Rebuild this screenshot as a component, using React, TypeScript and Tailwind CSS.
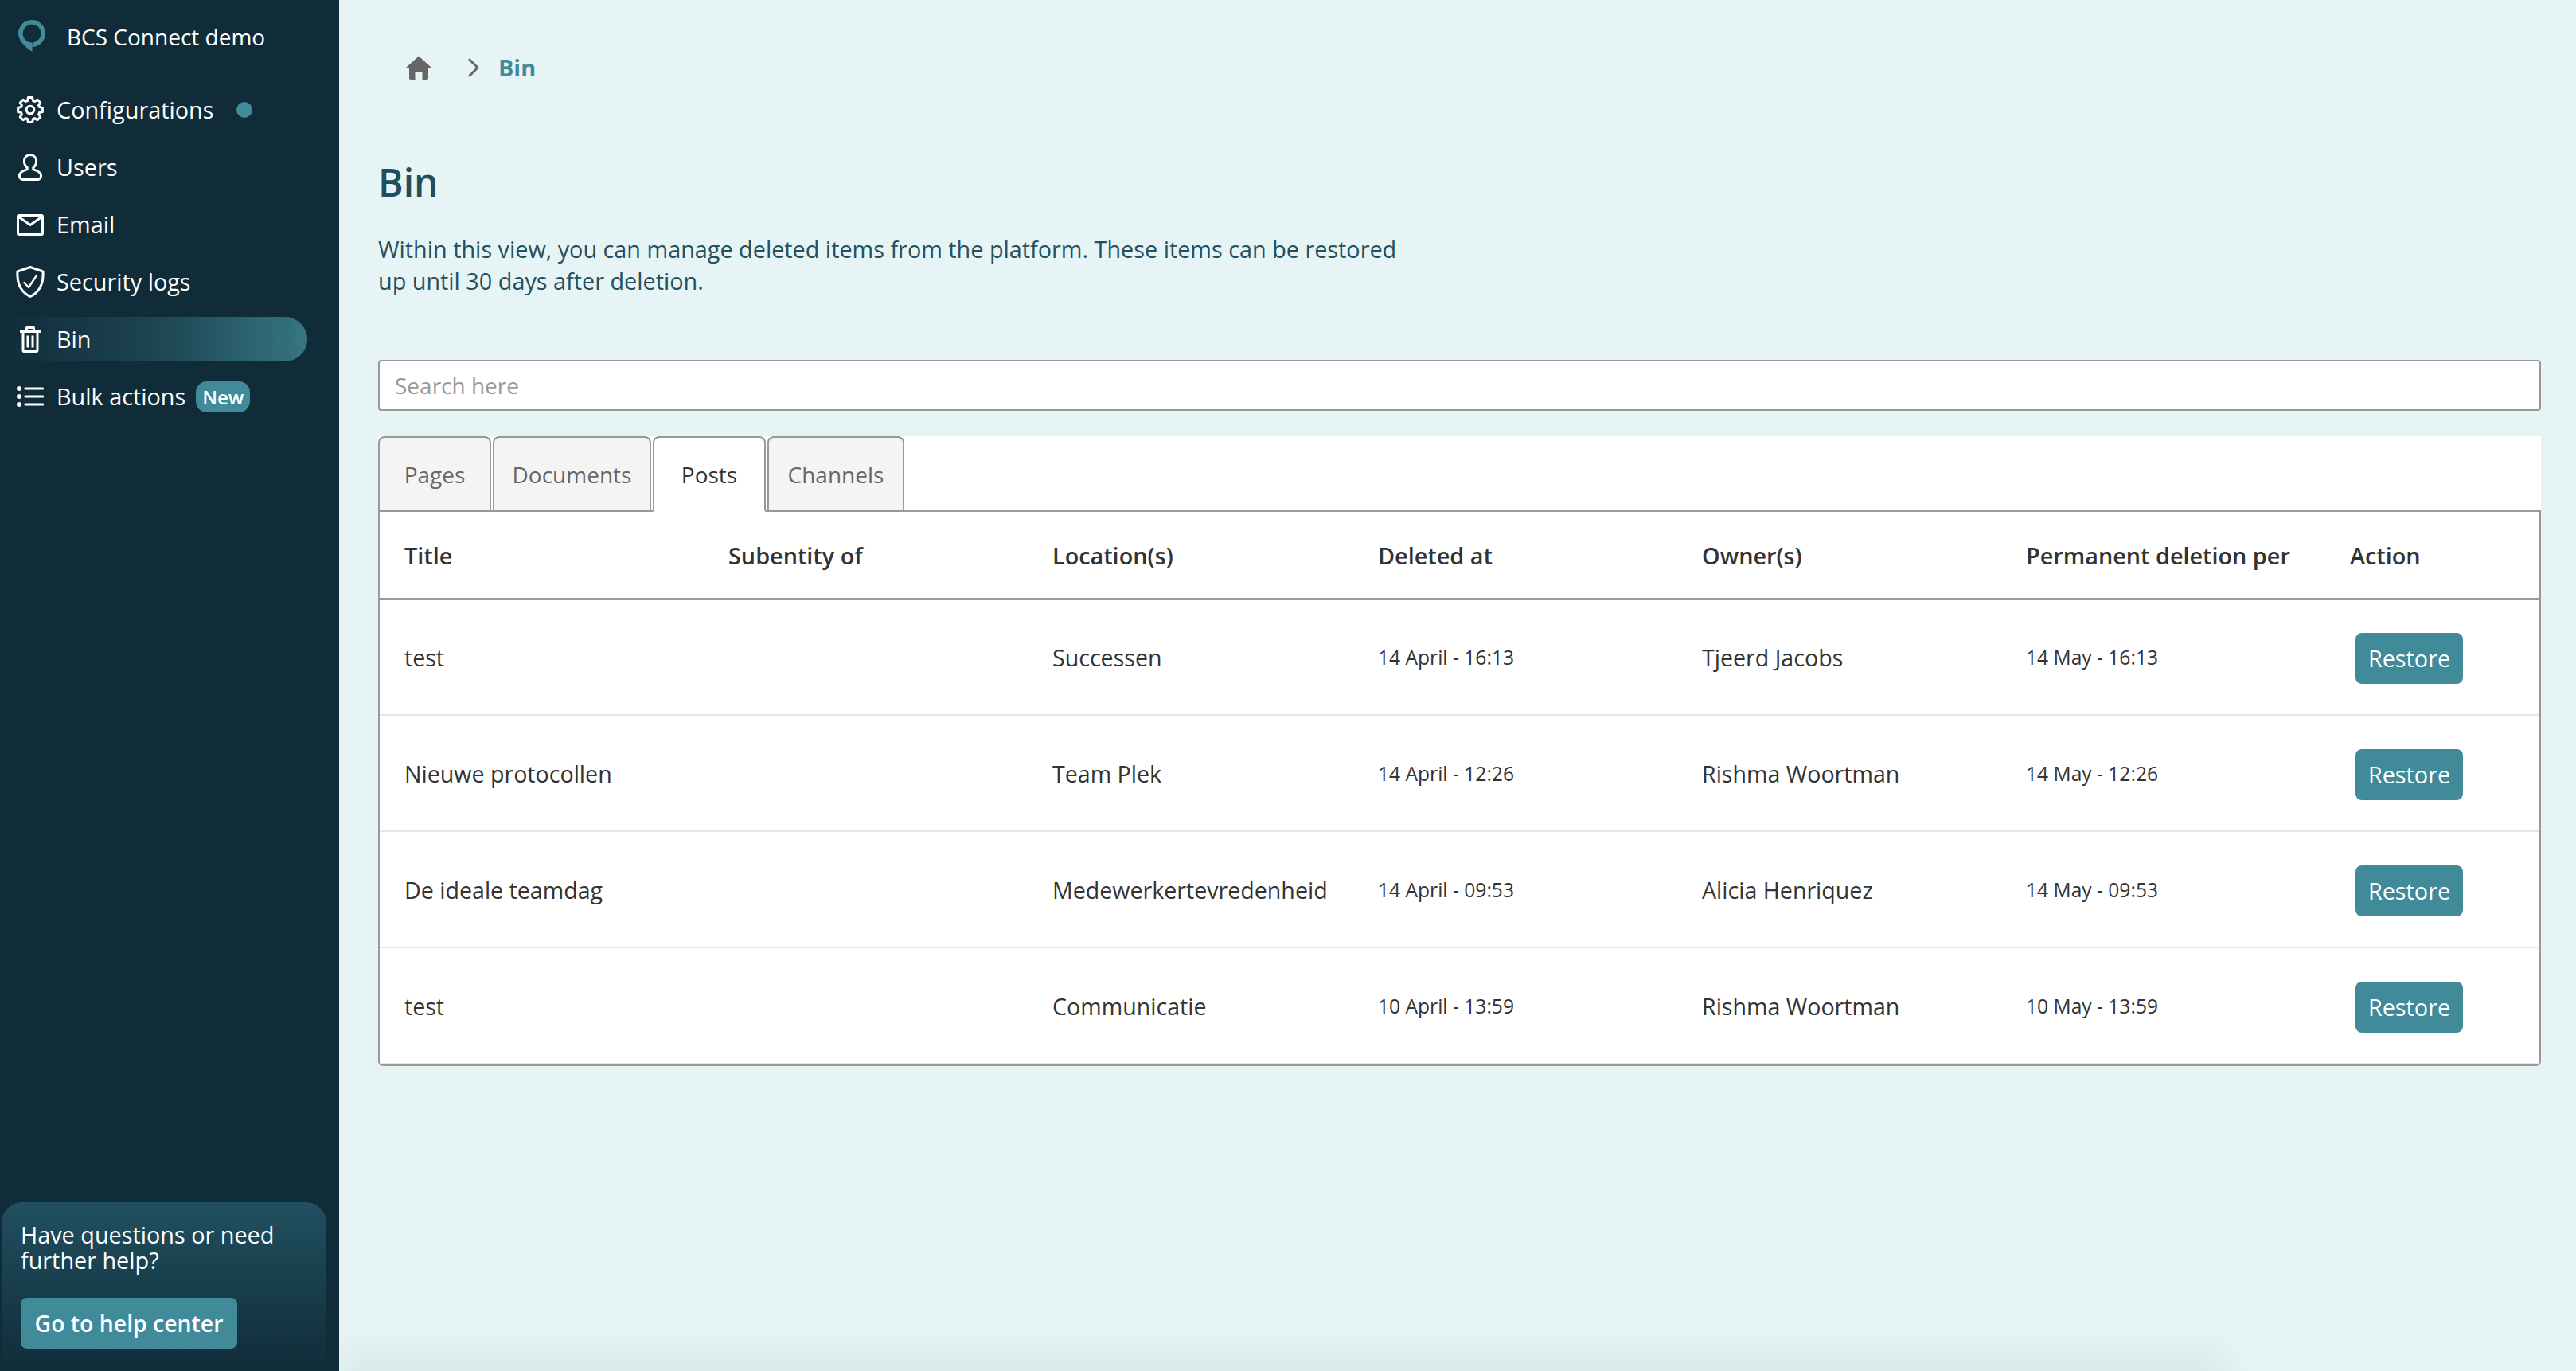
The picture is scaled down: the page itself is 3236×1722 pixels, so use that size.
type Row = {
  title: string;
  location: string;
  deleted: string;
  owner: string;
  permanent: string;
};

const rows: Row[] = [
  { title: "test", location: "Successen", deleted: "14 April - 16:13", owner: "Tjeerd Jacobs", permanent: "14 May - 16:13" },
  { title: "Nieuwe protocollen", location: "Team Plek", deleted: "14 April - 12:26", owner: "Rishma Woortman", permanent: "14 May - 12:26" },
  { title: "De ideale teamdag", location: "Medewerkertevredenheid", deleted: "14 April - 09:53", owner: "Alicia Henriquez", permanent: "14 May - 09:53" },
  { title: "test", location: "Communicatie", deleted: "10 April - 13:59", owner: "Rishma Woortman", permanent: "10 May - 13:59" },
];

const headers = ["Title", "Subentity of", "Location(s)", "Deleted at", "Owner(s)", "Permanent deletion per", "Action"];

const tabs = [
  { label: "Pages", width: "w-[142px]" },
  { label: "Documents", width: "w-[199px]" },
  { label: "Posts", width: "w-[142px]" },
  { label: "Channels", width: "w-[172px]" },
];

const columns = "grid grid-cols-[407px_407px_409px_407px_407px_407px_1fr] items-center pl-[31px]";

// 8 teeth, each tooth is four points on the inner and outer radius
function gearPath() {
  const points: string[] = [];
  for (let i = 0; i < 8; i++) {
    const a = (i * Math.PI) / 4 - Math.PI / 2;
    const at = (r: number, da: number) => `${(17 + r * Math.cos(a + da)).toFixed(2)} ${(17 + r * Math.sin(a + da)).toFixed(2)}`;
    points.push(at(12, -0.3), at(15.6, -0.17), at(15.6, 0.17), at(12, 0.3));
  }
  return `M${points.join("L")}Z`;
}

function GearIcon() {
  return (
    <svg viewBox="0 0 34 34" className="h-[34px] w-[34px] shrink-0" fill="none" stroke="currentColor" strokeWidth="3" strokeLinejoin="round">
      <path d={gearPath()} />
      <circle cx="17" cy="17" r="4.8" />
    </svg>
  );
}

function UserIcon() {
  return (
    <svg viewBox="0 0 30 34" className="h-[34px] w-[30px] shrink-0" fill="none" stroke="currentColor" strokeWidth="3" strokeLinejoin="round">
      <path d="M15 1.500c4.600 0 7.600 3.400 7.600 8 0 3.600-1.600 6.300-3.800 8v2.400c3.800 1.100 9.800 2.900 9.800 7.500 0 3-2.200 5.200-5 5.200H6.400c-2.800 0-5-2.200-5-5.200 0-4.600 6-6.400 9.800-7.500v-2.400c-2.200-1.700-3.800-4.400-3.800-8 0-4.600 3-8 7.600-8z" />
    </svg>
  );
}

function MailIcon() {
  return (
    <svg viewBox="0 0 34 27" className="h-[27px] w-[34px] shrink-0" fill="none" stroke="currentColor" strokeWidth="3" strokeLinejoin="round">
      <rect x="1.500" y="1.500" width="31" height="24" rx="1.500" />
      <path d="M2 3l15 10.500L32 3" />
    </svg>
  );
}

function ShieldIcon() {
  return (
    <svg viewBox="0 0 36 40" className="h-[40px] w-[36px] shrink-0" fill="none" stroke="currentColor" strokeWidth="3" strokeLinejoin="round" strokeLinecap="round">
      <path d="M18 1.500l16 5.500c.8 12.500-2.600 25-16 31.500C4.600 32 1.200 19.500 2 7z" />
      <path d="M10.500 21l5.500 6 10-15" strokeWidth="2.400" />
    </svg>
  );
}

function TrashIcon() {
  return (
    <svg viewBox="0 0 26 33" className="h-[33px] w-[26px] shrink-0" fill="none" stroke="currentColor" strokeWidth="3" strokeLinejoin="round">
      <path d="M0 6.500h26M8.500 6V1.500h9V6M4 6.500v23.800c0 .8.600 1.300 1.300 1.300h15.400c.7 0 1.300-.5 1.300-1.300V6.500M10 11.500v15M16 11.500v15" />
    </svg>
  );
}

function ListIcon() {
  return (
    <svg viewBox="0 0 34 26" className="h-[26px] w-[34px] shrink-0" fill="currentColor">
      <circle cx="3" cy="3" r="3" />
      <circle cx="3" cy="13" r="3" />
      <circle cx="3" cy="23" r="3" />
      <rect x="9.500" y="1.400" width="24.500" height="3.200" rx="1" />
      <rect x="9.500" y="11.400" width="24.500" height="3.200" rx="1" />
      <rect x="9.500" y="21.400" width="24.500" height="3.200" rx="1" />
    </svg>
  );
}

function NavItem({ icon, label, active, children }: { icon: React.ReactNode; label: string; active?: boolean; children?: React.ReactNode }) {
  return (
    <div className="flex h-[72px] items-center">
      <div className={`flex h-[56px] w-[386px] items-center rounded-r-[28px] ${active ? "bg-gradient-to-r from-[#102c39] via-[#1d4452] to-[#367682]" : ""}`}>
        <span className="ml-[21px] mr-[16px] flex w-[34px] shrink-0 items-center justify-center text-white">{icon}</span>
        <span className="text-[28.8px] leading-none text-white">{label}</span>
        {children}
      </div>
    </div>
  );
}

export default function App() {
  return (
    <div className="flex h-[1722px] w-[3236px] overflow-hidden bg-[#e6f4f5] font-['Open_Sans',sans-serif]">
      <aside className="flex h-full w-[426px] shrink-0 flex-col bg-[#102c39]">
        <div className="flex h-[102px] items-start pl-[23px] pt-[25px]">
          <svg viewBox="0 0 34 40" className="h-[40px] w-[34px] shrink-0">
            <path
              fillRule="evenodd"
              fill="#408a99"
              d="M17.500 40V34A17 17 0 1 0 4.500 28.500C8 33 12.500 37 17.500 40ZM17 5.500A11.500 11.500 0 0 1 18.500 28.400L17.500 33V28.500A11.500 11.500 0 0 1 17 5.500Z"
            />
          </svg>
          <span className="ml-[27px] text-[28px] leading-[42px] text-white">BCS Connect demo</span>
        </div>

        <nav className="flex flex-col">
          <NavItem icon={<GearIcon />} label="Configurations">
            <span className="ml-[29px] h-[20px] w-[20px] rounded-full bg-[#408a99]" />
          </NavItem>
          <NavItem icon={<UserIcon />} label="Users" />
          <NavItem icon={<MailIcon />} label="Email" />
          <NavItem icon={<ShieldIcon />} label="Security logs" />
          <NavItem icon={<TrashIcon />} label="Bin" active />
          <NavItem icon={<ListIcon />} label="Bulk actions">
            <span className="ml-[13px] h-[39px] rounded-[14px] bg-[#408a99] px-[8px] text-[24px] leading-[39px] font-semibold text-white">New</span>
          </NavItem>
        </nav>

        <div className="mx-[2px] mt-auto h-[212px] w-[408px] rounded-t-[26px] bg-gradient-to-b from-[#215060] to-[#102c39] px-[24px] pt-[25px]">
          <p className="text-[28.8px] leading-[32px] text-white">Have questions or need further help?</p>
          <button className="mt-[31px] h-[64px] w-[272px] rounded-[8px] bg-[#408a99] text-[28.4px] font-semibold text-white">Go to help center</button>
        </div>
      </aside>

      <main className="relative flex min-w-0 flex-1 flex-col overflow-hidden pl-[49px] pr-[44px]">
        <div className="flex h-[170px] items-center">
          <svg viewBox="0 0 32 30" className="ml-[35px] h-[30px] w-[32px] text-[#666]" fill="currentColor">
            <path d="M16 0.500 31 14c.8.800.3 2-.8 2H28v12c0 1.100-.9 2-2 2h-5.500v-9h-9v9H6c-1.100 0-2-.9-2-2V16H1.800C.7 16 .2 14.800 1 14z" />
          </svg>
          <svg viewBox="0 0 14 24" className="ml-[46px] h-[24px] w-[14px] text-[#666]" fill="none" stroke="currentColor" strokeWidth="3" strokeLinecap="round" strokeLinejoin="round">
            <path d="M2 2l10 10L2 22" />
          </svg>
          <span className="ml-[24px] text-[28.8px] font-bold text-[#408a99]">Bin</span>
        </div>

        <h1 className="mt-[26px] text-[48px] leading-[66px] font-semibold text-[#1f4e5c]">Bin</h1>
        <p className="mt-[31px] w-[1300px] text-[28.8px] leading-[40px] text-[#24505e]">
          Within this view, you can manage deleted items from the platform. These items can be restored up until 30 days after deletion.
        </p>

        <input
          placeholder="Search here"
          className="mt-[79px] h-[64px] w-full shrink-0 rounded-[4px] border-2 border-[#999] bg-white px-[19px] text-[28px] text-[#333] outline-none placeholder:text-[#999]"
        />

        <div className="mt-[32px] flex h-[95px] shrink-0 items-start gap-[2px] border-b-2 border-[#999] bg-white">
          {tabs.map((tab) => (
            <div
              key={tab.label}
              className={`flex items-center justify-center rounded-t-[8px] border-2 text-[28px] ${tab.width} ${tab.label === "Posts" ? "h-[95px] border-[#999] border-b-white bg-white text-[#333]" : "h-[93px] border-b-0 border-[#999] bg-[#f4f4f4] text-[#666]"}`}
            >
              {tab.label}
            </div>
          ))}
        </div>

        <div className="shrink-0 rounded-b-[6px] border-2 border-t-0 border-[#999] bg-white">
          <div className={`${columns} h-[110px] border-b-2 border-[#999] pt-[2px] text-[28.8px] font-semibold text-[#333]`}>
            {headers.map((h) => (
              <span key={h} className="whitespace-nowrap">{h}</span>
            ))}
          </div>
          {rows.map((row, i) => (
            <div key={i} className={`${columns} h-[146px] border-b-2 border-[#e5e5e5] pt-[3px] text-[28.6px] text-[#333]`}>
              <span>{row.title}</span>
              <span />
              <span className="whitespace-nowrap">{row.location}</span>
              <span className="text-[24.6px]">{row.deleted}</span>
              <span>{row.owner}</span>
              <span className="text-[24.6px]">{row.permanent}</span>
              <button className="ml-[7px] h-[64px] w-[135px] rounded-[8px] bg-[#408a99] text-[28.8px] font-medium text-white">Restore</button>
            </div>
          ))}
        </div>

        {/* soft shadow along the bottom edge of the page */}
        <div className="absolute bottom-[-20px] left-[20px] h-[20px] w-[2330px] shadow-[0_0_50px_20px_rgba(16,44,57,0.07)]" />
      </main>
    </div>
  );
}
